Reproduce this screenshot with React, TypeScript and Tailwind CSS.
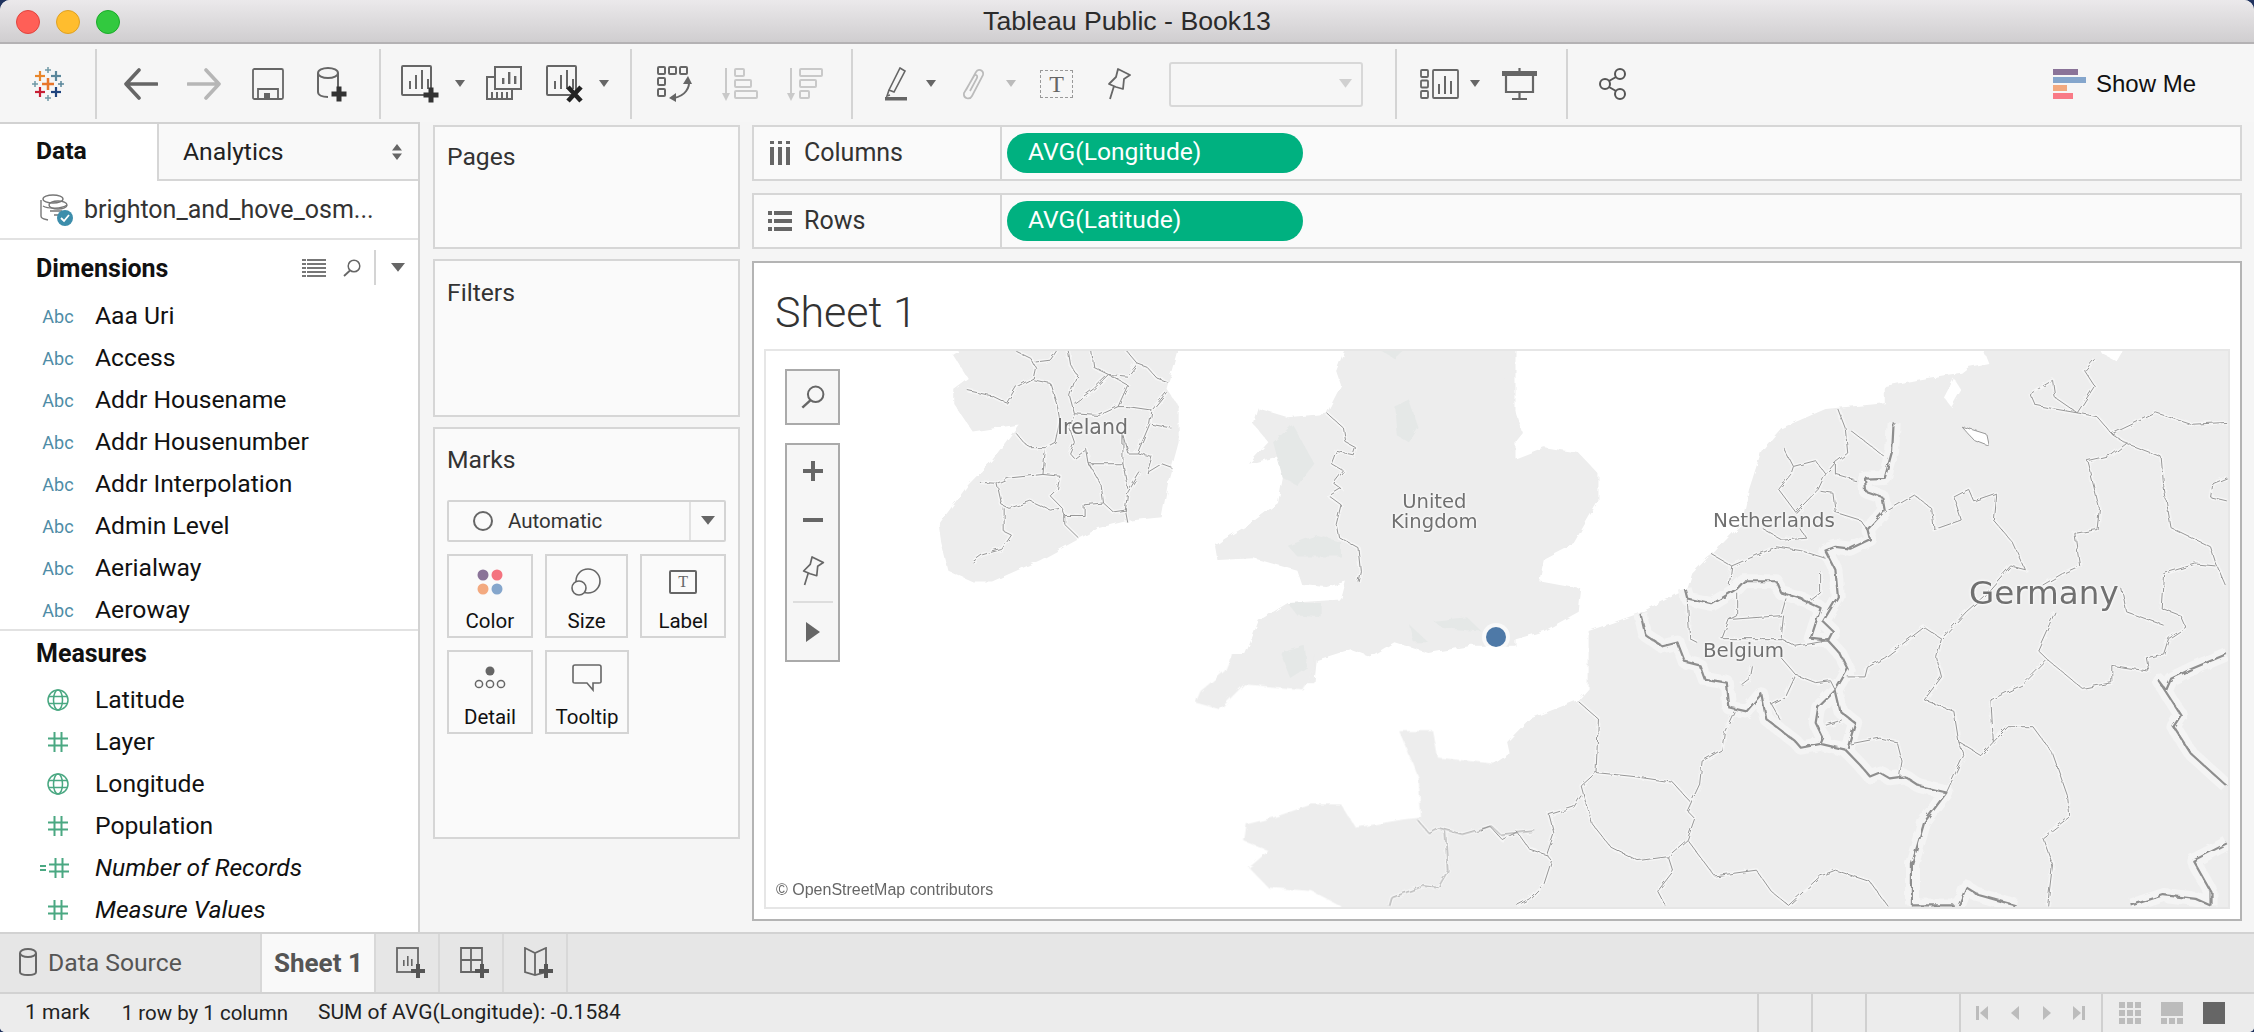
import React from "react";

const G = "#666666";

function Caret({ c = "#666", className = "" }: { c?: string; className?: string }) {
  return (
    <svg width="10" height="8" viewBox="0 0 10 8" preserveAspectRatio="none" className={className}>
      <path d="M0 0H10L5 7Z" fill={c} />
    </svg>
  );
}
function Div({ className = "" }: { className?: string }) {
  return <div className={`w-[2px] h-[70px] bg-[#d4d4d4] ${className}`} />;
}
function Plus({ x, y, s = 14, t = 5, c = "#333" }: { x: number; y: number; s?: number; t?: number; c?: string }) {
  return (
    <g fill={c}>
      <rect x={x - s / 2} y={y - t / 2} width={s} height={t} />
      <rect x={x - t / 2} y={y - s / 2} width={t} height={s} />
    </g>
  );
}
function Logo() {
  return (
    <svg width="32" height="36" viewBox="-16 -18 32 36" className="ml-[32px]">
      <Plus x={0} y={0} s={12} t={2.5} c="#e8762b" />
      <Plus x={-8} y={-8} s={10} t={2.2} c="#e8862b" />
      <Plus x={8} y={-8} s={10} t={2.2} c="#5b879b" />
      <Plus x={-8} y={8} s={10} t={2.2} c="#c72035" />
      <Plus x={8} y={8} s={10} t={2.2} c="#1f447e" />
      <Plus x={0} y={-14} s={6} t={1.5} c="#7099a6" />
      <Plus x={0} y={14} s={6} t={1.5} c="#7099a6" />
      <Plus x={-13} y={0} s={6} t={1.5} c="#7099a6" />
      <Plus x={13} y={0} s={6} t={1.5} c="#59879b" />
    </svg>
  );
}
function Arrow({ c, flip, className }: { c: string; flip?: boolean; className: string }) {
  return (
    <svg width="34" height="32" viewBox="0 0 34 32" className={className}>
      <path
        d={flip ? "M1 16H31M19 2L32 16L19 30" : "M33 16H3M15 2L2 16L15 30"}
        fill="none"
        stroke={c}
        strokeWidth="3.6"
        strokeLinecap="round"
        strokeLinejoin="round"
      />
    </svg>
  );
}
function Bars({ x, y, c = G, h = [8, 14, 20], w = 2, gap = 6 }: { x: number; y: number; c?: string; h?: number[]; w?: number; gap?: number }) {
  return (
    <g fill={c}>
      {h.map((v, i) => (
        <rect key={i} x={x + i * gap} y={y - v} width={w} height={v} />
      ))}
    </g>
  );
}
function Pin({ className = "", w = 24, h = 32 }: { className?: string; w?: number; h?: number }) {
  return (
    <svg width={w} height={h} viewBox="0 0 24 32" className={className}>
      <path
        d="M11 1L23 7L17 11L16 21L9 19L2 16L9 9ZM7 18L3 31"
        fill="none"
        stroke="#666"
        strokeWidth="1.8"
        strokeLinejoin="round"
      />
    </svg>
  );
}
function Search({ className = "", s = 18 }: { className?: string; s?: number }) {
  return (
    <svg width={s} height={s} viewBox="0 0 18 18" className={className}>
      <circle cx="11" cy="7" r="5.8" fill="none" stroke="#666" strokeWidth="1.5" />
      <path d="M7 11.5L1 17" stroke="#666" strokeWidth="1.8" />
    </svg>
  );
}

function Toolbar() {
  return (
    <div className="h-[78px] pt-[2px] flex items-center bg-[#f6f6f6] shrink-0">
      <Logo />
      <Div className="ml-[31px]" />
      <Arrow c="#666" className="ml-[27px]" />
      <Arrow c="#b6b6b6" flip className="ml-[29px]" />
      <svg width="32" height="32" viewBox="0 0 32 32" className="ml-[31px]">
        <rect x="1" y="1" width="30" height="30" rx="1.5" fill="none" stroke="#666" strokeWidth="1.8" />
        <path d="M6 31V21H26V31" fill="none" stroke="#666" strokeWidth="1.8" />
        <rect x="12" y="25" width="6" height="6" fill="#666" />
      </svg>
      <svg width="31" height="35" viewBox="0 0 31 35" className="ml-[33px]">
        <ellipse cx="11" cy="6" rx="10" ry="5" fill="none" stroke="#666" strokeWidth="2" />
        <path d="M1 6V25C1 28 5 30 11 30M21 6V20" fill="none" stroke="#666" strokeWidth="2" />
        <Plus x={22} y={27} s={15} t={5} />
      </svg>
      <Div className="ml-[31px]" />
      <svg width="38" height="38" viewBox="0 0 38 38" className="ml-[20px]">
        <rect x="1" y="1" width="29" height="29" rx="1" fill="none" stroke="#666" strokeWidth="2" />
        <Bars x={8} y={24} h={[8, 14, 19, 10]} />
        <Plus x={30} y={30} s={15} t={5} />
      </svg>
      <Caret className="ml-[16px]" />
      <svg width="36" height="36" viewBox="0 0 36 36" className="ml-[21px]">
        <path d="M9 11H1V33H26V24" fill="none" stroke="#666" strokeWidth="2" />
        <rect x="9" y="1" width="26" height="22" fill="#f6f6f6" stroke="#666" strokeWidth="2" />
        <Bars x={16} y={18} h={[6, 12, 8]} w={2.4} />
        <Bars x={5} y={32} h={[6, 6, 6, 6]} w={2} gap={5} />
      </svg>
      <svg width="38" height="38" viewBox="0 0 38 38" className="ml-[24px]">
        <rect x="1" y="1" width="29" height="29" rx="1" fill="none" stroke="#666" strokeWidth="2" />
        <Bars x={8} y={24} h={[8, 14, 19, 10]} />
        <path d="M22 22L35 36M35 22L22 36" stroke="#222" strokeWidth="4.6" />
      </svg>
      <Caret className="ml-[15px]" />
      <Div className="ml-[21px]" />
      <svg width="36" height="36" viewBox="0 0 36 36" className="ml-[25px]">
        <g fill="none" stroke="#666" strokeWidth="2">
          <rect x="1" y="1" width="7" height="7" rx="1" />
          <rect x="12" y="1" width="7" height="7" rx="1" />
          <rect x="23" y="1" width="7" height="7" rx="1" />
          <rect x="1" y="12" width="7" height="7" rx="1" />
          <rect x="1" y="23" width="7" height="7" rx="1" />
          <path d="M32 14C33 22 28 30 17 32" />
        </g>
        <path d="M26 18L31 10L35 18ZM19 27L12 32L19 36Z" fill="#666" />
      </svg>
      <svg width="36" height="34" viewBox="0 0 36 34" className="ml-[29px] opacity-40">
        <path d="M4 1V28" stroke="#888" strokeWidth="2" />
        <path d="M0 26H8L4 34Z" fill="#888" />
        <g fill="none" stroke="#888" strokeWidth="2">
          <rect x="13" y="2" width="9" height="7" rx="1" />
          <rect x="13" y="13" width="16" height="7" rx="1" />
          <rect x="13" y="24" width="22" height="7" rx="1" />
        </g>
      </svg>
      <svg width="36" height="34" viewBox="0 0 36 34" className="ml-[29px] opacity-40">
        <path d="M4 1V28" stroke="#888" strokeWidth="2" />
        <path d="M0 26H8L4 34Z" fill="#888" />
        <g fill="none" stroke="#888" strokeWidth="2">
          <rect x="13" y="2" width="22" height="7" rx="1" />
          <rect x="13" y="13" width="16" height="7" rx="1" />
          <rect x="13" y="24" width="9" height="7" rx="1" />
        </g>
      </svg>
      <Div className="ml-[28px]" />
      <svg width="22" height="34" viewBox="0 0 22 34" className="ml-[32px]">
        <path d="M15 1L20 4L9 25L4 23Z" fill="none" stroke="#666" strokeWidth="1.6" />
        <path d="M4 23L2 29L5 28" fill="none" stroke="#666" strokeWidth="1.6" />
        <rect x="0" y="30" width="22" height="3.5" fill="#666" />
      </svg>
      <Caret className="ml-[19px]" />
      <svg width="24" height="32" viewBox="0 0 24 32" className="ml-[25px]">
        <path
          d="M5 22L15 4C17 0 23 2 22 7L11 28C9 32 2 31 3 25L13 8C14 6 17 7 16 10L9 23"
          fill="none"
          stroke="#bbb"
          strokeWidth="1.7"
        />
      </svg>
      <Caret c="#bbb" className="ml-[21px]" />
      <div className="ml-[24px] w-[33px] h-[28px] border-[1.5px] border-dashed border-[#999] flex items-center justify-center text-[#666] text-[24px] leading-none [font-family:'Liberation_Serif',serif]">
        T
      </div>
      <Pin className="ml-[34px]" />
      <div className="ml-[38px] w-[194px] h-[45px] rounded-[3px] border-2 border-[#d8d8d8] flex items-center justify-end pr-[9px]">
        <Caret c="#d0d0d0" className="w-[13px] h-[10px]" />
      </div>
      <Div className="ml-[32px]" />
      <svg width="39" height="30" viewBox="0 0 39 30" className="ml-[23px]">
        <g fill="none" stroke="#666" strokeWidth="1.8">
          <rect x="1" y="1" width="7" height="7" rx="1" />
          <rect x="1" y="11.5" width="7" height="7" rx="1" />
          <rect x="1" y="22" width="7" height="7" rx="1" />
          <rect x="13" y="1" width="25" height="28" rx="1" />
        </g>
        <Bars x={18} y={25} h={[10, 18, 13]} />
      </svg>
      <Caret className="ml-[11px]" />
      <svg width="35" height="32" viewBox="0 0 35 32" className="ml-[22px]">
        <rect x="0" y="3" width="35" height="5" fill="#666" />
        <path d="M17.5 0V3M4 8V24H31V8M17.5 24V31M10 31H25" fill="none" stroke="#666" strokeWidth="2.2" />
      </svg>
      <Div className="ml-[29px]" />
      <svg width="27" height="32" viewBox="0 0 27 32" className="ml-[31px]">
        <g fill="none" stroke="#555" strokeWidth="2">
          <circle cx="6" cy="16" r="5" />
          <circle cx="21" cy="6" r="5" />
          <circle cx="21" cy="26" r="5" />
          <path d="M10 13L17 9M10 19L17 23" />
        </g>
      </svg>
      <div className="ml-auto flex items-center mr-[58px]">
        <div className="w-[33px] flex flex-col gap-[2px]">
          <div className="h-[6px] w-[25px] bg-[#8a7398]" />
          <div className="h-[6px] w-[33px] bg-[#85a6cc]" />
          <div className="h-[6px] w-[14px] bg-[#f3a97f]" />
          <div className="h-[6px] w-[20px] bg-[#f97a86]" />
        </div>
        <span className="ml-[10px] text-[24px] text-[#111] [font-family:'Liberation_Sans',sans-serif]">Show Me</span>
      </div>
    </div>
  );
}

function Globe() {
  return (
    <svg width="22" height="22" viewBox="0 0 22 22">
      <g fill="none" stroke="#4aa882" strokeWidth="1.5">
        <circle cx="11" cy="11" r="10" />
        <ellipse cx="11" cy="11" rx="4.5" ry="10" />
        <path d="M2 7.5H20M2 14.5H20" />
      </g>
    </svg>
  );
}
function Hash() {
  return (
    <svg width="20" height="20" viewBox="0 0 20 20">
      <path d="M6.5 0V20M13.5 0V20M0 6.5H20M0 13.5H20" stroke="#4aa882" strokeWidth="2" />
    </svg>
  );
}

const dims = ["Aaa Uri", "Access", "Addr Housename", "Addr Housenumber", "Addr Interpolation", "Admin Level", "Aerialway", "Aeroway"];

function Row({ icon, label, italic }: { icon: React.ReactNode; label: string; italic?: boolean }) {
  return (
    <div className="h-[42px] flex items-center">
      <div className="w-[95px] flex justify-center pr-[11px] pl-[32px] shrink-0">{icon}</div>
      <span className={`text-[24.7px] text-[#111] ${italic ? "italic" : ""}`}>{label}</span>
    </div>
  );
}

function LeftPanel() {
  return (
    <div className="w-[420px] shrink-0 bg-white border-r-2 border-t-2 border-[#d2d2d2] flex flex-col">
      <div className="h-[57px] flex shrink-0">
        <div className="w-[157px] pl-[36px] pb-[3px] flex items-center font-bold text-[24.7px] text-[#111]">Data</div>
        <div className="flex-1 border-l-2 border-b-2 border-[#d6d6d6] bg-[#f9f9f9] pl-[24px] pr-[16px] flex items-center justify-between">
          <span className="text-[24.7px] text-[#222]">Analytics</span>
          <svg width="10" height="16" viewBox="0 0 10 16">
            <path d="M5 0L10 6.5H0ZM5 16L0 9.5H10Z" fill="#666" />
          </svg>
        </div>
      </div>
      <div className="h-[59px] flex items-center pl-[40px] border-b-2 border-[#e2e2e2] shrink-0">
        <svg width="34" height="32" viewBox="0 0 34 32">
          <g fill="none" stroke="#777" strokeWidth="1.4">
            <ellipse cx="13" cy="5" rx="10" ry="4" />
            <path d="M1 6V22C1 25 4 25 8 26M3 12C8 15 22 15 27 11M10 17H22M14 21H20" />
            <ellipse cx="18" cy="11" rx="9" ry="4" />
          </g>
          <circle cx="25" cy="24" r="8" fill="#3c8dab" />
          <path d="M21 24L24 27L29 21" fill="none" stroke="#fff" strokeWidth="1.8" />
        </svg>
        <span className="ml-[10px] text-[25px] text-[#333]">brighton_and_hove_osm...</span>
      </div>
      <div className="h-[55px] flex items-center pl-[36px] shrink-0">
        <span className="font-bold text-[25px] pt-[2px] text-[#111]">Dimensions</span>
        <svg width="24" height="18" viewBox="0 0 24 18" className="ml-auto">
          <g fill="#777">
            {[0, 4, 8, 12, 16].map((y) => (
              <React.Fragment key={y}>
                <rect x="0" y={y} width="4" height="2" />
                <rect x="5" y={y} width="19" height="2" />
              </React.Fragment>
            ))}
          </g>
        </svg>
        <Search className="ml-[17px]" />
        <div className="ml-[13px] w-[2px] h-[35px] bg-[#d4d4d4]" />
        <Caret className="ml-[15px] mr-[13px] w-[14px] h-[10px]" />
      </div>
      {dims.map((d) => (
        <Row key={d} label={d} icon={<span className="text-[18px] text-[#4e8ca6]">Abc</span>} />
      ))}
      <div className="h-[50px] mt-[-2px] flex items-center pl-[36px] pb-[2px] border-t-2 border-[#e2e2e2] shrink-0">
        <span className="font-bold text-[25px] text-[#111]">Measures</span>
      </div>
      <Row label="Latitude" icon={<Globe />} />
      <Row label="Layer" icon={<Hash />} />
      <Row label="Longitude" icon={<Globe />} />
      <Row label="Population" icon={<Hash />} />
      <Row
        label="Number of Records"
        italic
        icon={
          <span className="flex items-center gap-[3px] ml-[-8px]">
            <span className="w-[6px] h-[6px] border-y-2 border-[#4aa882]" />
            <Hash />
          </span>
        }
      />
      <Row label="Measure Values" italic icon={<Hash />} />
    </div>
  );
}

function MarkCard({ label, w, children }: { label: string; w: string; children: React.ReactNode }) {
  return (
    <div className={`${w} h-[84px] border-2 border-[#d4d4d4] flex flex-col items-center`}>
      <div className="h-[52px] flex items-center justify-center">{children}</div>
      <span className="text-[20.5px] leading-[26px] text-[#111]">{label}</span>
    </div>
  );
}

function MiddlePanel() {
  const card = "border-2 border-[#d6d6d6] bg-[#fafafa] px-[12px]";
  return (
    <div className="w-[332px] shrink-0 pl-[13px] pr-[12px] pt-[3px] flex flex-col gap-[10px]">
      <div className={`${card} h-[124px] pt-[11px] text-[24.7px] text-[#333]`}>Pages</div>
      <div className={`${card} h-[158px] pt-[13px] text-[24.7px] text-[#333]`}>Filters</div>
      <div className={`${card} h-[412px]`}>
        <div className="h-[71px] pt-[12px] text-[24.7px] text-[#333]">Marks</div>
        <div className="h-[42px] border-2 border-[#d4d4d4] rounded-[2px] flex items-center">
          <div className="w-[242px] flex items-center pl-[24px] border-r-2 border-[#e2e2e2] h-full">
            <span className="w-[20px] h-[20px] rounded-full border-2 border-[#666]" />
            <span className="ml-[15px] text-[20.5px] text-[#333]">Automatic</span>
          </div>
          <div className="flex-1 flex justify-center">
            <Caret className="w-[14px] h-[10px]" />
          </div>
        </div>
        <div className="mt-[12px] flex gap-[12px]">
          <MarkCard label="Color" w="w-[86px]">
            <svg width="26" height="26" viewBox="0 0 26 26">
              <circle cx="6" cy="6" r="5.5" fill="#8a7398" />
              <circle cx="20" cy="6" r="5.5" fill="#f4737f" />
              <circle cx="6" cy="20" r="5.5" fill="#f3a97f" />
              <circle cx="20" cy="20" r="5.5" fill="#85a6cc" />
            </svg>
          </MarkCard>
          <MarkCard label="Size" w="w-[84px]">
            <svg width="30" height="28" viewBox="0 0 30 28">
              <circle cx="17" cy="13" r="12" fill="none" stroke="#666" strokeWidth="1.6" />
              <circle cx="8" cy="20" r="7" fill="#fafafa" stroke="#666" strokeWidth="1.6" />
            </svg>
          </MarkCard>
          <MarkCard label="Label" w="w-[86px]">
            <div className="w-[28px] h-[24px] border-2 border-[#666] rounded-[2px] flex items-center justify-center text-[16px] leading-none text-[#666] [font-family:'Liberation_Serif',serif]">
              T
            </div>
          </MarkCard>
        </div>
        <div className="mt-[12px] flex gap-[12px]">
          <MarkCard label="Detail" w="w-[86px]">
            <svg width="32" height="24" viewBox="0 0 32 24">
              <circle cx="16" cy="5" r="4.5" fill="#666" />
              <g fill="none" stroke="#666" strokeWidth="1.5">
                <circle cx="5" cy="18" r="3.6" />
                <circle cx="16" cy="18" r="3.6" />
                <circle cx="27" cy="18" r="3.6" />
              </g>
            </svg>
          </MarkCard>
          <MarkCard label="Tooltip" w="w-[84px]">
            <svg width="30" height="28" viewBox="0 0 30 28">
              <path d="M3 1H27Q29 1 29 3V18Q29 19 27 19H21V26L15 19H3Q1 19 1 18V3Q1 1 3 1Z" fill="none" stroke="#666" strokeWidth="1.6" />
            </svg>
          </MarkCard>
        </div>
      </div>
    </div>
  );
}

function Shelf({ icon, label, pill }: { icon: React.ReactNode; label: string; pill: string }) {
  return (
    <div className="h-[56px] border-2 border-[#d6d6d6] bg-[#fafafa] flex items-center">
      <div className="w-[248px] h-full shrink-0 flex items-center border-r-2 border-[#d6d6d6]">
        <div className="w-[50px] flex justify-center shrink-0 pl-[2px]">{icon}</div>
        <span className="text-[25px] text-[#333]">{label}</span>
      </div>
      <div className="ml-[5px] w-[296px] h-[40px] rounded-[20px] bg-[#00b180] text-white text-[24.6px] pl-[21px] pb-[2px] flex items-center">{pill}</div>
    </div>
  );
}

const P = ({ d }: { d: string[] }) => (
  <>
    {d.map((p, i) => (
      <polyline key={i} points={p} vectorEffect="non-scaling-stroke" />
    ))}
  </>
);

const irelandLines = [
  "570,645 600,665 610,690 605,720 570,745 550,790 520,770 470,755",
  "605,725 640,735 655,800 660,840 650,900 630,915 600,915 585,900 570,875",
  "655,640 640,670 610,675",
  "675,640 680,680 695,710 680,770 690,820 740,825 780,800 800,740 760,710 730,750 690,790",
  "725,640 730,690 760,710 800,715 820,680 840,690 860,720 880,730",
  "795,640 820,680",
  "780,800 800,800 850,810 880,760",
  "850,810 845,850 820,930 800,930 790,880 790,960 720,960 715,920 690,945 680,930 690,900 680,860 690,820",
  "850,850 890,860",
  "820,930 850,940 840,985 870,960 890,970",
  "825,985 800,1040 795,1090 800,1125",
  "720,960 745,1020 750,1070 770,1095 795,1090",
  "790,960 800,1030",
  "630,920 625,990 555,1000 530,1015 495,1012",
  "625,990 660,995 655,1030 640,1050 665,1085 670,1105",
  "530,1015 540,1075 555,1085 600,1065 640,1090 660,1085",
  "545,1085 545,1150 560,1160 540,1200 500,1215 480,1235",
  "670,1105 710,1105 710,1075 750,1070",
  "670,1105 670,1130 700,1170",
  "1212,820 1245,860 1250,900 1270,915 1265,935 1230,925 1220,960 1245,980 1225,1015 1240,1030 1215,1050 1240,1075 1230,1130 1235,1165 1275,1195 1280,1260 1275,1290",
];
const thick = [
  "838,265 835,340 820,410 780,412 782,445 815,460 820,495 785,545 790,570 750,595 720,590 700,600 720,650 725,720 695,785 715,810 705,835 730,870 745,910 720,965 685,1010 680,1050 695,1090 690,1105 740,1120",
  "720,965 730,1020 760,1050 745,1115",
  "415,700 420,725 470,740 520,700 535,680 600,680 610,710 650,725 690,750 670,830 705,835",
  "325,765 335,820 370,850 400,840 415,890 445,900 455,935 500,945 505,1010 540,1020 570,975 580,1040 640,1100 650,1115 690,1105",
  "740,1120 770,1160 790,1190 810,1180 830,1195 860,1190 890,1215 945,1232 900,1310 875,1420 875,1527",
  "1513,870 1440,910 1400,935 1390,965 1375,940 1420,1030 1405,1060 1440,1130 1513,1215",
  "1513,1365 1445,1410 1480,1490 1480,1527",
  "875,1527 960,1527",
  "970,1527 985,1480 1010,1500 1085,1527",
  "1320,1527 1385,1500 1450,1510 1480,1527",
];
const thin = [
  "1245,100 1225,130 1245,170 1210,240",
  "1115,190 1160,155 1165,200 1210,240 1250,250 1280,295 1310,320 1380,355 1385,430 1400,540 1480,590 1490,630 1510,690",
  "1115,190 1125,220 1165,230 1210,240",
  "1280,295 1370,240 1440,270 1513,265",
  "1310,320 1280,350 1230,365 1255,490 1250,545 1205,555 1215,640 1180,660 1140,690",
  "1385,660 1450,635 1490,640",
  "1385,660 1380,750 1420,770 1430,800 1395,830 1385,870 1350,880 1355,915 1280,900 1280,945 1220,960 1150,885 1130,860 1165,760",
  "1300,700 1310,760 1385,795",
  "1150,885 1100,950 1035,990 1040,1100 1015,1135 970,1100",
  "1040,1100 1070,1060 1120,1060 1160,1130 1190,1240 1195,1295 1140,1350 1160,1420 1150,1527",
  "970,1100 980,1135 945,1232",
  "970,1100 960,1020 900,990 935,930 925,880 935,830 900,800 820,880 785,905 780,930 745,930",
  "935,830 985,760 1020,720 1075,640 1105,650 1080,580 1040,520 1045,450 1000,470 990,440 960,460 975,520 920,545 915,490 880,455 820,500",
  "725,230 740,280 745,345 720,370 720,400 760,415",
  "750,285 820,355",
  "615,330 635,380 680,365 700,400 685,440 640,500 605,440 630,400 635,380",
  "700,400 720,370",
  "690,445 715,450 720,500 770,520 785,545",
  "575,545 610,570 660,565 650,545",
  "600,590 650,600 700,620",
  "470,610 510,640 600,590",
  "510,640 505,690",
  "420,730 425,830 440,840",
  "520,710 520,770 505,780 610,770 620,725",
  "505,780 490,830 570,830 610,830 640,850 705,835",
  "615,770 610,830",
  "610,880 640,925 620,980 590,1000 610,1045",
  "640,925 680,945 710,940 720,965",
  "550,900 545,935 530,950",
  "690,655 690,710 660,740",
  "200,995 240,1040 235,1180 205,1215 225,1310 265,1375 320,1410 380,1400 420,1355 435,1300 420,1280 445,1210 450,1150 490,1120 495,1075 515,1020",
  "235,1180 310,1190 390,1205 425,1255",
  "205,1240 190,1270 140,1290 150,1340 135,1395 100,1380 75,1335 45,1355 20,1320 0,1330",
  "135,1395 145,1410 130,1470 100,1510 75,1527",
  "380,1400 390,1440 360,1490 375,1527",
  "420,1355 475,1450 560,1435 590,1490 625,1527 690,1450 720,1435 790,1465 825,1527",
  "700,1060 735,1045",
  "750,1105 810,1090 845,1100 855,1150 850,1190",
  "1513,410 1485,425 1480,460 1513,470",
];
const brittany = ["1400,480 1420,515 1440,500 1490,520 1550,495 1568,520 1640,510", "1455,510 1460,630 1440,680 1410,675 1345,710 1340,735"];

function MapArt() {
  return (
    <svg width="1462" height="556" viewBox="766 350 1462 556" className="absolute left-0 top-0">
      <defs>
        <filter id="rough" x="-2%" y="-2%" width="104%" height="104%">
          <feTurbulence type="fractalNoise" baseFrequency="0.12" numOctaves="2" seed="4" />
          <feDisplacementMap in="SourceGraphic" scale="5" />
        </filter>
      </defs>
      <g filter="url(#rough)">
        <g fill="#ededed">
          <g transform="translate(740 120) scale(.4847 .357)">
            <path d="M470 630L905 630L880 750L905 800L905 900L885 1000L870 1110L800 1120L740 1140L700 1170L620 1230L520 1290L480 1290L430 1260L415 1180L410 1130L470 1020L520 950L575 850L480 870L440 790L440 750L470 720L440 655Z" />
            <path d="M1250 630L1230 700L1240 740L1210 820L1130 830L1070 805L1060 850L1090 900L1050 960L1110 940L1120 1000L1110 1070L1050 1130L1000 1170L980 1190L985 1230L1060 1225L1150 1260L1160 1300L1210 1305L1250 1290L1240 1340L1130 1350L1070 1400L1050 1470L1015 1575L1185 1575L1190 1510L1260 1480L1300 1500L1350 1460L1420 1490L1510 1470L1600 1470L1600 630Z" />
          </g>
          <g transform="translate(740 660) scale(.4847 .3333)">
            <path d="M1015 -20L1000 30L950 90L940 125L990 145L1040 70L1160 85L1185 30L1185 -20Z" />
            <path d="M1360 210L1430 210L1440 290L1568 310L1800 300L1800 750L1240 750L1240 735L1180 690L1090 680L1050 620L1090 570L1040 540L1045 490L1100 470L1180 430L1240 430L1270 500L1370 475L1405 470L1400 350Z" />
          </g>
          <g transform="translate(1480 320) scale(.4936 .3827)">
            <path d="M-100 60L25 60L60 190L85 290L60 330L70 360L130 330L200 345L240 400L240 470L190 580L130 620L120 680L205 700L200 760L130 810L50 840L-100 855Z" />
            <path d="M-60 1160L25 1160L60 1130L55 1100L100 1040L200 990L220 960L220 810L320 765L420 700L430 660L460 620L470 610L530 530L545 440L570 340L610 280L700 230L820 215L820 170L900 150L975 135L990 120L1030 110L1015 60L1530 60L1530 1540L-60 1540Z" />
          </g>
        </g>
        <g fill="#ffffff" transform="translate(1480 320) scale(.4936 .3827)">
          <path d="M975 275L1025 295L1030 325L1000 310Z" stroke="#999" vectorEffect="non-scaling-stroke" />
          <path d="M940 200L955 225L975 180L960 150Z" />
          <path d="M1250 60L1310 60L1290 105L1260 85Z" />
        </g>
        <g fill="#e5e8e7" transform="translate(740 120) scale(.4847 .357)">
          <path d="M1100 900L1140 850L1185 960L1150 1020L1120 1000Z" />
          <path d="M1350 800L1380 780L1400 860L1380 900L1355 880Z" />
          <path d="M1130 1190L1190 1160L1240 1180L1240 1220L1150 1220Z" />
          <path d="M1130 1350L1200 1350L1200 1390L1150 1385Z" />
          <path d="M1115 1490L1165 1470L1170 1530L1135 1560Z" />
          <path d="M1430 1400L1500 1390L1530 1430L1450 1420Z" />
          <path d="M1380 1410L1420 1460L1390 1460Z" />
          <path d="M1320 640L1370 640L1350 665Z" />
        </g>
        <g fill="none" strokeLinejoin="round">
          <g transform="translate(1480 320) scale(.4936 .3827)" stroke="#f4f4f4" strokeWidth="14">
            <P d={thick} />
          </g>
          <g stroke="#f6f6f6" strokeWidth="4">
            <g transform="translate(740 120) scale(.4847 .357)">
              <P d={irelandLines} />
            </g>
            <g transform="translate(1480 320) scale(.4936 .3827)">
              <P d={thin} />
            </g>
            <g transform="translate(740 660) scale(.4847 .3333)">
              <P d={brittany} />
            </g>
          </g>
          <g stroke="#969696" strokeWidth="1">
            <g transform="translate(740 120) scale(.4847 .357)">
              <P d={irelandLines} />
            </g>
            <g transform="translate(1480 320) scale(.4936 .3827)">
              <P d={thin} />
            </g>
            <g transform="translate(740 660) scale(.4847 .3333)">
              <P d={brittany} />
            </g>
          </g>
          <g transform="translate(1480 320) scale(.4936 .3827)" stroke="#8e8e8e" strokeWidth="2.2">
            <P d={thick} />
          </g>
        </g>
      </g>
      <circle cx="1496" cy="636" r="14" fill="#ffffff" opacity=".65" />
      <circle cx="1496" cy="636" r="10" fill="#4e79a7" />
    </svg>
  );
}

const mapLabel = "absolute text-[#707070] [font-family:'DejaVu_Sans',sans-serif] leading-none text-center [text-shadow:0_0_3px_#fff,0_0_3px_#fff] whitespace-nowrap";

function MapView() {
  return (
    <div className="relative mx-[10px] h-[560px] border-2 border-[#e6e6e6] bg-white overflow-hidden">
      <MapArt />
      <span className={`${mapLabel} left-[291px] top-[66px] text-[20.5px]`}>Ireland</span>
      <span className={`${mapLabel} left-[625px] top-[141px] text-[19.6px] leading-[23px]`}>
        United
        <br />
        Kingdom
      </span>
      <span className={`${mapLabel} left-[947px] top-[159px] text-[20px]`}>Netherlands</span>
      <span className={`${mapLabel} left-[937px] top-[290px] text-[19.8px]`}>Belgium</span>
      <span className={`${mapLabel} left-[1203px] top-[226px] text-[32.6px]`}>Germany</span>
      <span className="absolute left-[10px] bottom-[9px] text-[16px] text-[#666] leading-none [font-family:'Liberation_Sans',sans-serif]">© OpenStreetMap contributors</span>
      <div className="absolute left-[19px] top-[18px] w-[55px] h-[56px] border-2 border-[#aaa] bg-[#f6f6f6] flex items-center justify-center">
        <Search s={24} />
      </div>
      <div className="absolute left-[19px] top-[92px] w-[55px] h-[219px] border-2 border-[#aaa] bg-[#f6f6f6] flex flex-col items-center">
        <svg width="20" height="20" viewBox="0 0 20 20" className="mt-[16px] shrink-0">
          <path d="M0 10H20M10 0V20" stroke="#666" strokeWidth="4" />
        </svg>
        <div className="mt-[37px] w-[20px] h-[4px] bg-[#666] shrink-0" />
        <Pin className="mt-[34px] shrink-0" w={24} h={30} />
        <div className="mt-[15px] w-[40px] h-[2px] bg-[#ddd] shrink-0" />
        <svg width="14" height="20" viewBox="0 0 14 20" className="mt-[19px] shrink-0">
          <path d="M0 0L14 10L0 20Z" fill="#666" />
        </svg>
      </div>
    </div>
  );
}

function RightPanel() {
  return (
    <div className="flex-1 pr-[12px] pt-[3px] flex flex-col gap-[12px] min-w-0">
      <Shelf
        label="Columns"
        pill="AVG(Longitude)"
        icon={
          <svg width="20" height="24" viewBox="0 0 20 24">
            <g fill="#666">
              <rect x="0" y="0" width="4" height="3" />
              <rect x="8" y="0" width="4" height="3" />
              <rect x="16" y="0" width="4" height="3" />
              <rect x="0" y="6" width="4" height="18" />
              <rect x="8" y="6" width="4" height="18" />
              <rect x="16" y="6" width="4" height="18" />
            </g>
          </svg>
        }
      />
      <Shelf
        label="Rows"
        pill="AVG(Latitude)"
        icon={
          <svg width="24" height="20" viewBox="0 0 24 20">
            <g fill="#666">
              <rect x="0" y="0" width="4" height="4" />
              <rect x="0" y="8" width="4" height="4" />
              <rect x="0" y="16" width="4" height="4" />
              <rect x="6" y="0" width="18" height="4" />
              <rect x="6" y="8" width="18" height="4" />
              <rect x="6" y="16" width="18" height="4" />
            </g>
          </svg>
        }
      />
      <div className="h-[660px] border-2 border-[#b4b4b4] bg-white flex flex-col">
        <div className="h-[86px] pl-[21px] pt-[22px] text-[43px] font-light leading-[54px] text-[#333]">Sheet 1</div>
        <MapView />
      </div>
    </div>
  );
}

function TabIcon({ kind }: { kind: "sheet" | "dash" | "story" }) {
  return (
    <svg width="30" height="32" viewBox="0 0 30 32">
      <g fill="none" stroke="#666" strokeWidth="1.8">
        {kind === "sheet" && <rect x="1" y="1" width="21" height="24" />}
        {kind === "dash" && <path d="M1 1H22V25H1ZM1 13H22M11 1V25" />}
        {kind === "story" && <path d="M1 1L11 6L22 1V25L11 28L1 25ZM11 6V28" />}
      </g>
      {kind === "sheet" && <Bars x={7} y={19} h={[6, 10, 7]} w={1.6} gap={4} />}
      <Plus x={22} y={24} s={14} t={4} c="#555" />
    </svg>
  );
}

function BottomTabs() {
  return (
    <div className="h-[62px] shrink-0 bg-[#e6e6e6] border-t-2 border-b-2 border-[#d2d2d2] flex">
      <div className="w-[262px] border-r-2 border-[#d8d8d8] pl-[19px] flex items-center text-[24.7px] text-[#555]">
        <svg width="18" height="32" viewBox="0 0 18 32">
          <g fill="none" stroke="#666" strokeWidth="2">
            <ellipse cx="9" cy="6" rx="8" ry="4" />
            <path d="M1 6V25C1 29 17 29 17 25V6" />
          </g>
        </svg>
        <span className="ml-[11px]">Data Source</span>
      </div>
      <div className="w-[114px] bg-[#f9f9f9] border-r-2 border-[#d8d8d8] pl-[12px] flex items-center text-[26px] font-bold text-[#555]">Sheet 1</div>
      <div className="w-[64px] border-r-2 border-[#d8d8d8] pl-[20px] flex items-center">
        <TabIcon kind="sheet" />
      </div>
      <div className="w-[64px] border-r-2 border-[#d8d8d8] pl-[20px] flex items-center">
        <TabIcon kind="dash" />
      </div>
      <div className="w-[64px] border-r-2 border-[#d8d8d8] pl-[20px] flex items-center">
        <TabIcon kind="story" />
      </div>
    </div>
  );
}

function StatusBar() {
  const cell = "h-full border-l-2 border-[#d0d0d0]";
  return (
    <div className="h-[38px] shrink-0 bg-[#ececec] flex items-center text-[21px] text-[#222]">
      <span className="ml-[25px]">1 mark</span>
      <span className="ml-[32px] text-[20.5px]">1 row by 1 column</span>
      <span className="ml-[30px]">SUM of AVG(Longitude): -0.1584</span>
      <div className="ml-auto flex h-full">
        <div className={`${cell} w-[54px]`} />
        <div className={`${cell} w-[54px]`} />
        <div className={`${cell} w-[94px]`} />
        <div className={`${cell} w-[142px] flex items-center pl-[15px]`}>
          <svg width="110" height="16" viewBox="0 0 110 16">
            <g fill="#bcbcbc">
              <rect x="0" y="1" width="3" height="14" />
              <path d="M12 1V15L4 8Z" />
              <path d="M43 1V15L35 8Z" />
              <path d="M67 1V15L75 8Z" />
              <path d="M97 1V15L105 8Z" />
              <rect x="106" y="1" width="3" height="14" />
            </g>
          </svg>
        </div>
        <div className={`${cell} w-[153px] flex items-center pl-[16px] gap-[20px]`}>
          <svg width="22" height="22" viewBox="0 0 22 22">
            <g fill="#bcbcbc">
              {[0, 8, 16].map((y) =>
                [0, 8, 16].map((x) => <rect key={`${x}-${y}`} x={x} y={y} width="6" height="6" />)
              )}
            </g>
          </svg>
          <svg width="22" height="22" viewBox="0 0 22 22">
            <g fill="#bcbcbc">
              <rect x="0" y="0" width="22" height="14" />
              <rect x="0" y="16" width="6" height="6" />
              <rect x="8" y="16" width="6" height="6" />
              <rect x="16" y="16" width="6" height="6" />
            </g>
          </svg>
          <div className="w-[22px] h-[22px] bg-[#666]" />
        </div>
      </div>
    </div>
  );
}

export default function App() {
  return (
    <div className="w-[2254px] h-[1032px] bg-[#20335f] overflow-hidden [font-family:Roboto,sans-serif]">
      <div className="w-full h-full rounded-t-[10px] rounded-b-[5px] overflow-hidden flex flex-col bg-[#f5f5f5]">
        <div className="h-[44px] shrink-0 bg-gradient-to-b from-[#ebe9eb] to-[#d0ced0] border-b-2 border-[#b4b2b4] relative flex items-center justify-center">
          <div className="absolute left-[16px] top-[10px] flex gap-[16px]">
            <span className="w-[24px] h-[24px] rounded-full bg-[#ff5f57] border border-[#e0443e]" />
            <span className="w-[24px] h-[24px] rounded-full bg-[#ffbd2e] border border-[#dea123]" />
            <span className="w-[24px] h-[24px] rounded-full bg-[#32c93f] border border-[#1aab29]" />
          </div>
          <span className="text-[26.7px] text-[#2b2b2b] [font-family:'Liberation_Sans',sans-serif]">Tableau Public - Book13</span>
        </div>
        <Toolbar />
        <div className="flex-1 flex min-h-0">
          <LeftPanel />
          <MiddlePanel />
          <RightPanel />
        </div>
        <BottomTabs />
        <StatusBar />
      </div>
    </div>
  );
}
